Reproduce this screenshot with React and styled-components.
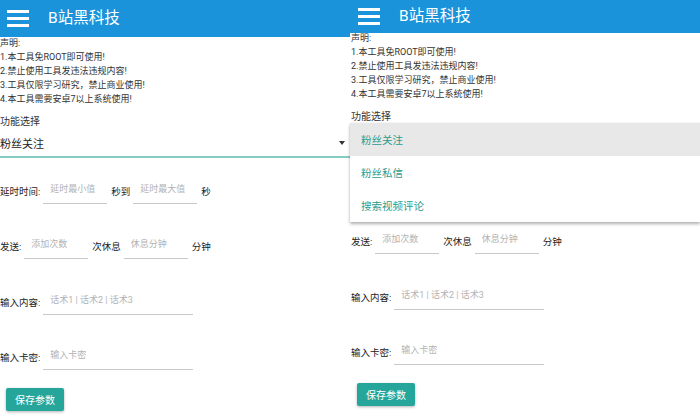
import React from 'react';
import styled, { createGlobalStyle } from 'styled-components';

const GlobalStyle = createGlobalStyle`
  html, body {
    margin: 0;
    padding: 0;
    background: #fff;
  }
  body {
    font-family: Roboto, "Noto Sans CJK SC", sans-serif;
  }
`;

const Page = styled.div`
  display: flex;
  width: 700px;
  height: 418px;
  overflow: hidden;
  background: #fff;
`;

const Screen = styled.div`
  width: 350px;
  flex-shrink: 0;
  display: flex;
  flex-direction: column;
`;

const AppBar = styled.header`
  height: ${p => p.$height}px;
  flex-shrink: 0;
  background: #1a93db;
  display: flex;
  align-items: center;
  padding-left: ${p => p.$inset}px;
`;

const Burger = styled.span`
  display: flex;
  flex-direction: column;
  gap: 4px;
  width: 22px;
  span {
    height: 3px;
    background: #fff;
  }
`;

const Title = styled.h1`
  margin: 0 0 0 19px;
  font-size: 15.5px;
  font-weight: 400;
  color: #fff;
  line-height: 1;
`;

const Body = styled.div`
  display: flex;
  flex-direction: column;
  margin-top: ${p => p.$shift}px;
  padding-left: ${p => p.$inset}px;
`;

const Notice = styled.div`
  font-size: 9px;
  line-height: 14px;
  color: #333;
`;

const SectionLabel = styled.div`
  margin-top: 9px;
  font-size: 10px;
  line-height: 14px;
  color: #333;
`;

const Select = styled.div`
  position: relative;
  height: 27px;
  border-bottom: 2px solid #84cdc4;
  display: flex;
  align-items: center;
  justify-content: space-between;
  padding-right: 5px;
  font-size: 11px;
  color: #222;
`;

const Chosen = styled.span`
  visibility: ${p => (p.$hidden ? 'hidden' : 'visible')};
`;

const Caret = styled.span`
  width: 0;
  height: 0;
  border-left: 3px solid transparent;
  border-right: 3px solid transparent;
  border-top: 4px solid #333;
`;

const Menu = styled.ul`
  position: absolute;
  top: -1px;
  left: ${p => -p.$inset}px;
  right: 0;
  margin: 0;
  padding: 0;
  list-style: none;
  background: #fff;
  box-shadow: 0 2px 3px rgba(0, 0, 0, 0.3), 0 0 1px rgba(0, 0, 0, 0.12);
  z-index: 2;
`;

const MenuItem = styled.li`
  height: 33px;
  display: flex;
  align-items: center;
  padding-left: 11px;
  font-size: 10.5px;
  color: #2a9d8f;
  background: ${p => (p.$active ? '#e8e8e8' : '#fff')};
`;

const FieldRow = styled.div`
  display: flex;
  align-items: flex-end;
  margin-top: ${p => p.$gap}px;
`;

const RowText = styled.span`
  font-size: 9.5px;
  line-height: 14px;
  color: #222;
  padding-bottom: 5px;
  white-space: nowrap;
`;

const Field = styled.input`
  box-sizing: border-box;
  width: ${p => p.$width}px;
  height: 28px;
  margin: 0 4px 0 3px;
  padding: 0 0 2px 7px;
  border: none;
  border-bottom: 1px solid #c8c8c8;
  outline: none;
  background: transparent;
  font-family: inherit;
  font-size: 9px;
  color: #333;
  &::placeholder {
    color: #b3b3b3;
  }
`;

const SaveButton = styled.button`
  align-self: flex-start;
  margin: 18px 0 0 6px;
  width: 58px;
  height: 23px;
  padding: 0;
  border: none;
  border-radius: 2px;
  background: #26a69a;
  color: #fff;
  font-family: inherit;
  font-size: 10px;
  box-shadow: 0 1px 3px rgba(0, 0, 0, 0.3);
`;

const notices = [
  '声明:',
  '1.本工具免ROOT即可使用!',
  '2.禁止使用工具发违法违规内容!',
  '3.工具仅限学习研究，禁止商业使用!',
  '4.本工具需要安卓7以上系统使用!',
];

const modes = ['粉丝关注', '粉丝私信', '搜索视频评论'];

function Phone({ barHeight, barInset, shift, inset, open }) {
  return (
    <Screen>
      <AppBar $height={barHeight} $inset={barInset}>
        <Burger>
          <span />
          <span />
          <span />
        </Burger>
        <Title>B站黑科技</Title>
      </AppBar>
      <Body $shift={shift} $inset={inset}>
        <Notice>
          {notices.map(line => (
            <div key={line}>{line}</div>
          ))}
        </Notice>
        <SectionLabel>功能选择</SectionLabel>
        <Select>
          <Chosen $hidden={open}>粉丝关注</Chosen>
          <Caret />
          {open && (
            <Menu $inset={inset}>
              {modes.map((m, i) => (
                <MenuItem key={m} $active={i === 0}>{m}</MenuItem>
              ))}
            </Menu>
          )}
        </Select>
        <FieldRow $gap={18}>
          <RowText>延时时间: </RowText>
          <Field $width={64} placeholder="延时最小值" />
          <RowText>秒到</RowText>
          <Field $width={64} placeholder="延时最大值" />
          <RowText>秒</RowText>
        </FieldRow>
        <FieldRow $gap={27}>
          <RowText>发送:</RowText>
          <Field $width={64} placeholder="添加次数" />
          <RowText>次休息</RowText>
          <Field $width={64} placeholder="休息分钟" />
          <RowText>分钟</RowText>
        </FieldRow>
        <FieldRow $gap={28}>
          <RowText>输入内容:</RowText>
          <Field $width={150} placeholder="话术1 | 话术2 | 话术3" />
        </FieldRow>
        <FieldRow $gap={27}>
          <RowText>输入卡密:</RowText>
          <Field $width={150} placeholder="输入卡密" />
        </FieldRow>
        <SaveButton>保存参数</SaveButton>
      </Body>
    </Screen>
  );
}

export default function App() {
  return (
    <>
      <GlobalStyle />
      <Page>
        <Phone barHeight={37} barInset={7} shift={-1} inset={0} />
        <Phone barHeight={33} barInset={8} shift={-2} inset={1} open />
      </Page>
    </>
  );
}
